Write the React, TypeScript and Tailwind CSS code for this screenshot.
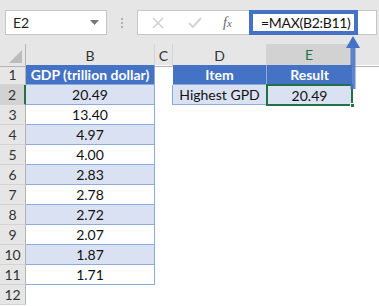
import React from "react";

const bData = ["20.49", "13.40", "4.97", "4.00", "2.83", "2.78", "2.72", "2.07", "1.87", "1.71"];

const font = { fontFamily: "Lato, 'Open Sans', sans-serif" };

function RowHeader({ n, selected }: { n: number; selected?: boolean }) {
  return (
    <div
      className={
        "h-[20px] flex items-center justify-center text-[14px] text-[#333] border-b border-[#d4d4d4] " +
        (selected ? "bg-[#d2d2d2] border-r-2 border-r-[#217346]" : "bg-[#e6e6e6] border-r border-r-[#b4b4b4]")
      }
    >
      {n}
    </div>
  );
}

export default function App() {
  const rows = Array.from({ length: 12 }, (_, i) => i + 1);
  return (
    <div className="w-[379px] h-[306px] bg-white overflow-hidden relative" style={font}>
      {/* top formula bar */}
      <div className="h-[44px] bg-[#e6e6e6] flex items-center pl-[5px] pr-[2px] pt-[1px]">
        <div className="w-[102px] h-[25px] bg-white border border-[#c6c6c6] flex items-center justify-between pl-[7px] pr-[7px]">
          <span className="text-[14px] text-[#222]">E2</span>
          <svg width="9" height="5" viewBox="0 0 9 5">
            <path d="M0 0 H9 L4.5 5 Z" fill="#777" />
          </svg>
        </div>
        <div className="w-[30px] flex flex-col items-center gap-[2px]">
          <div className="w-[2px] h-[2px] bg-[#b0b0b0]" />
          <div className="w-[2px] h-[2px] bg-[#b0b0b0]" />
          <div className="w-[2px] h-[2px] bg-[#b0b0b0]" />
        </div>
        <div className="flex-1 h-[25px] bg-white border border-[#c6c6c6] flex items-center">
          <div className="w-[112px] flex items-center">
            <svg className="ml-[14px]" width="12" height="12" viewBox="0 0 12 12">
              <path d="M1 1 L11 11 M11 1 L1 11" stroke="#cfcfcf" strokeWidth="1.5" />
            </svg>
            <svg className="ml-[24px]" width="14" height="11" viewBox="0 0 14 11">
              <path d="M1 6 L5 10 L13 1" stroke="#d4d4d4" strokeWidth="2" fill="none" />
            </svg>
            <span className="ml-[21px] text-[14px] italic text-[#666]" style={{ fontFamily: "'Liberation Serif', serif" }}>
              f<span className="text-[11px]">x</span>
            </span>
          </div>
          <div className="w-[109px] h-[25px] border-[4px] border-[#4472c4] flex items-center pl-[8px] text-[14px] tracking-[-0.3px] text-[#111] -ml-[1px]">
            =MAX(B2:B11)
          </div>
        </div>
      </div>

      {/* column headers */}
      <div className="grid grid-cols-[26px_129px_18px_94px_85px_1fr] h-[21px] bg-[#e6e6e6] text-[14px] text-[#333]">
        <div className="border-r border-[#b4b4b4] border-b border-b-[#b4b4b4] relative">
          <svg className="absolute right-[3px] bottom-[3px]" width="13" height="13" viewBox="0 0 13 13">
            <path d="M13 0 V13 H0 Z" fill="#bcbcbc" />
          </svg>
        </div>
        <div className="border-r border-[#d4d4d4] border-b border-b-[#b4b4b4] flex items-center justify-center">B</div>
        <div className="border-r border-[#d4d4d4] border-b border-b-[#b4b4b4] flex items-center justify-center">C</div>
        <div className="border-r border-[#d4d4d4] border-b border-b-[#b4b4b4] flex items-center justify-center">D</div>
        <div className="bg-[#d2d2d2] border-r border-[#d4d4d4] border-b-2 border-b-[#217346] flex items-center justify-center text-[#217346]">E</div>
        <div className="border-b border-b-[#b4b4b4]" />
      </div>

      {/* sheet body */}
      <div className="grid grid-cols-[26px_129px_18px_94px_85px_1fr] text-[14px] text-[#111]">
        {rows.map((n) => {
          const isHeader = n === 1;
          const bVal = n >= 2 && n <= 11 ? bData[n - 2] : null;
          const banded = n % 2 === 0;
          return (
            <React.Fragment key={n}>
              <RowHeader n={n} selected={n === 2} />
              {isHeader ? (
                <div className="h-[20px] bg-[#4472c4] text-white font-bold flex items-center justify-center border-r border-b border-[#8ea9db]">
                  GDP (trillion dollar)
                </div>
              ) : bVal ? (
                <div
                  className={
                    "h-[20px] flex items-center justify-center border-r border-b border-[#8ea9db] " +
                    (banded ? "bg-[#d9e1f2]" : "bg-white")
                  }
                >
                  {bVal}
                </div>
              ) : (
                <div className="h-[20px]" />
              )}
              <div className="h-[20px]" />
              {n === 1 ? (
                <>
                  <div className="h-[20px] bg-[#4472c4] text-white font-bold flex items-center justify-center border-r border-b border-[#8ea9db]">
                    Item
                  </div>
                  <div className="h-[20px] bg-[#4472c4] text-white font-bold flex items-center justify-center border-b border-[#8ea9db]">
                    Result
                  </div>
                </>
              ) : n === 2 ? (
                <>
                  <div className="h-[20px] bg-[#d9e1f2] flex items-center justify-center border-l border-r border-b border-[#8ea9db] -ml-[1px]">
                    Highest GPD
                  </div>
                  <div className="h-[20px] bg-[#d9e1f2] flex items-center justify-center relative">
                    20.49
                    <div className="absolute -top-[1px] -left-[1px] -right-[1px] -bottom-[1px] border-2 border-[#217346]" />
                    <div className="absolute -right-[3px] -bottom-[3px] w-[5px] h-[5px] bg-[#217346] border border-white" />
                  </div>
                </>
              ) : (
                <>
                  <div className="h-[20px]" />
                  <div className="h-[20px]" />
                </>
              )}
              <div className="h-[20px]" />
            </React.Fragment>
          );
        })}
      </div>

      {/* annotation arrow */}
      <svg className="absolute left-[345px] top-[36px]" width="16" height="54" viewBox="0 0 16 54">
        <path d="M8 0 L15 12 L1 12 Z" fill="#4472c4" />
        <rect x="5.5" y="11" width="5" height="42" fill="#4472c4" opacity="0.85" />
      </svg>
    </div>
  );
}
